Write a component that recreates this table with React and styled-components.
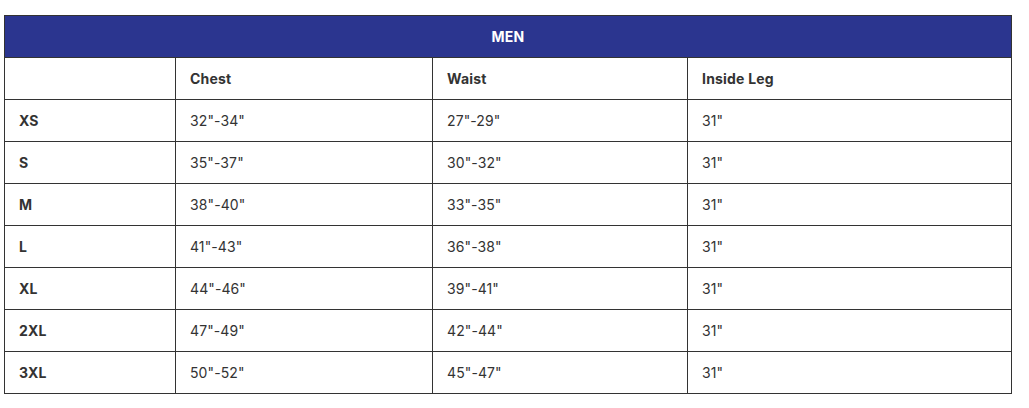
import React from 'react'
import styled, { createGlobalStyle } from 'styled-components'

const GlobalStyle = createGlobalStyle`
  body {
    margin: 0;
    background: #ffffff;
    font-family: "Inter", "Liberation Sans", sans-serif;
  }
`

const sizes = [
  ['XS', '32"-34"', '27"-29"', '31"'],
  ['S', '35"-37"', '30"-32"', '31"'],
  ['M', '38"-40"', '33"-35"', '31"'],
  ['L', '41"-43"', '36"-38"', '31"'],
  ['XL', '44"-46"', '39"-41"', '31"'],
  ['2XL', '47"-49"', '42"-44"', '31"'],
  ['3XL', '50"-52"', '45"-47"', '31"'],
]

function App() {
  return (
    <Page>
      <GlobalStyle />
      <SizeTable>
        <colgroup>
          <col style={{ width: 171 }} />
          <col style={{ width: 257 }} />
          <col style={{ width: 255 }} />
          <col />
        </colgroup>
        <thead>
          <Row>
            <Banner colSpan={4}>MEN</Banner>
          </Row>
        </thead>
        <tbody>
          <Row>
            <Cell bold></Cell>
            <Cell bold>Chest</Cell>
            <Cell bold>Waist</Cell>
            <Cell bold>Inside Leg</Cell>
          </Row>
          {sizes.map((row) => (
            <Row key={row[0]}>
              <Cell bold>{row[0]}</Cell>
              <Cell>{row[1]}</Cell>
              <Cell>{row[2]}</Cell>
              <Cell>{row[3]}</Cell>
            </Row>
          ))}
        </tbody>
      </SizeTable>
    </Page>
  )
}

export default App

const Page = styled.div`
  padding: 15px 17px 0 4px;
`

const SizeTable = styled.table`
  width: 1008px;
  border-collapse: collapse;
  table-layout: fixed;
  border: 1px solid #333;
`

const Row = styled.tr`
  height: 42px;
`

const Banner = styled.th`
  padding: 0;
  background: #2b358f;
  color: #fff;
  font-size: 14px;
  font-weight: 700;
  text-align: center;
  letter-spacing: 0.2px;
  border: 1px solid #333;
`

const Cell = styled.td`
  padding: 0 14px;
  border: 1px solid #333;
  color: #333;
  font-size: 14px;
  line-height: 17px;
  font-weight: ${(p) => (p.bold ? 700 : 400)};
  letter-spacing: ${(p) => (p.bold ? '0.2px' : '0.1px')};
  vertical-align: middle;
`
